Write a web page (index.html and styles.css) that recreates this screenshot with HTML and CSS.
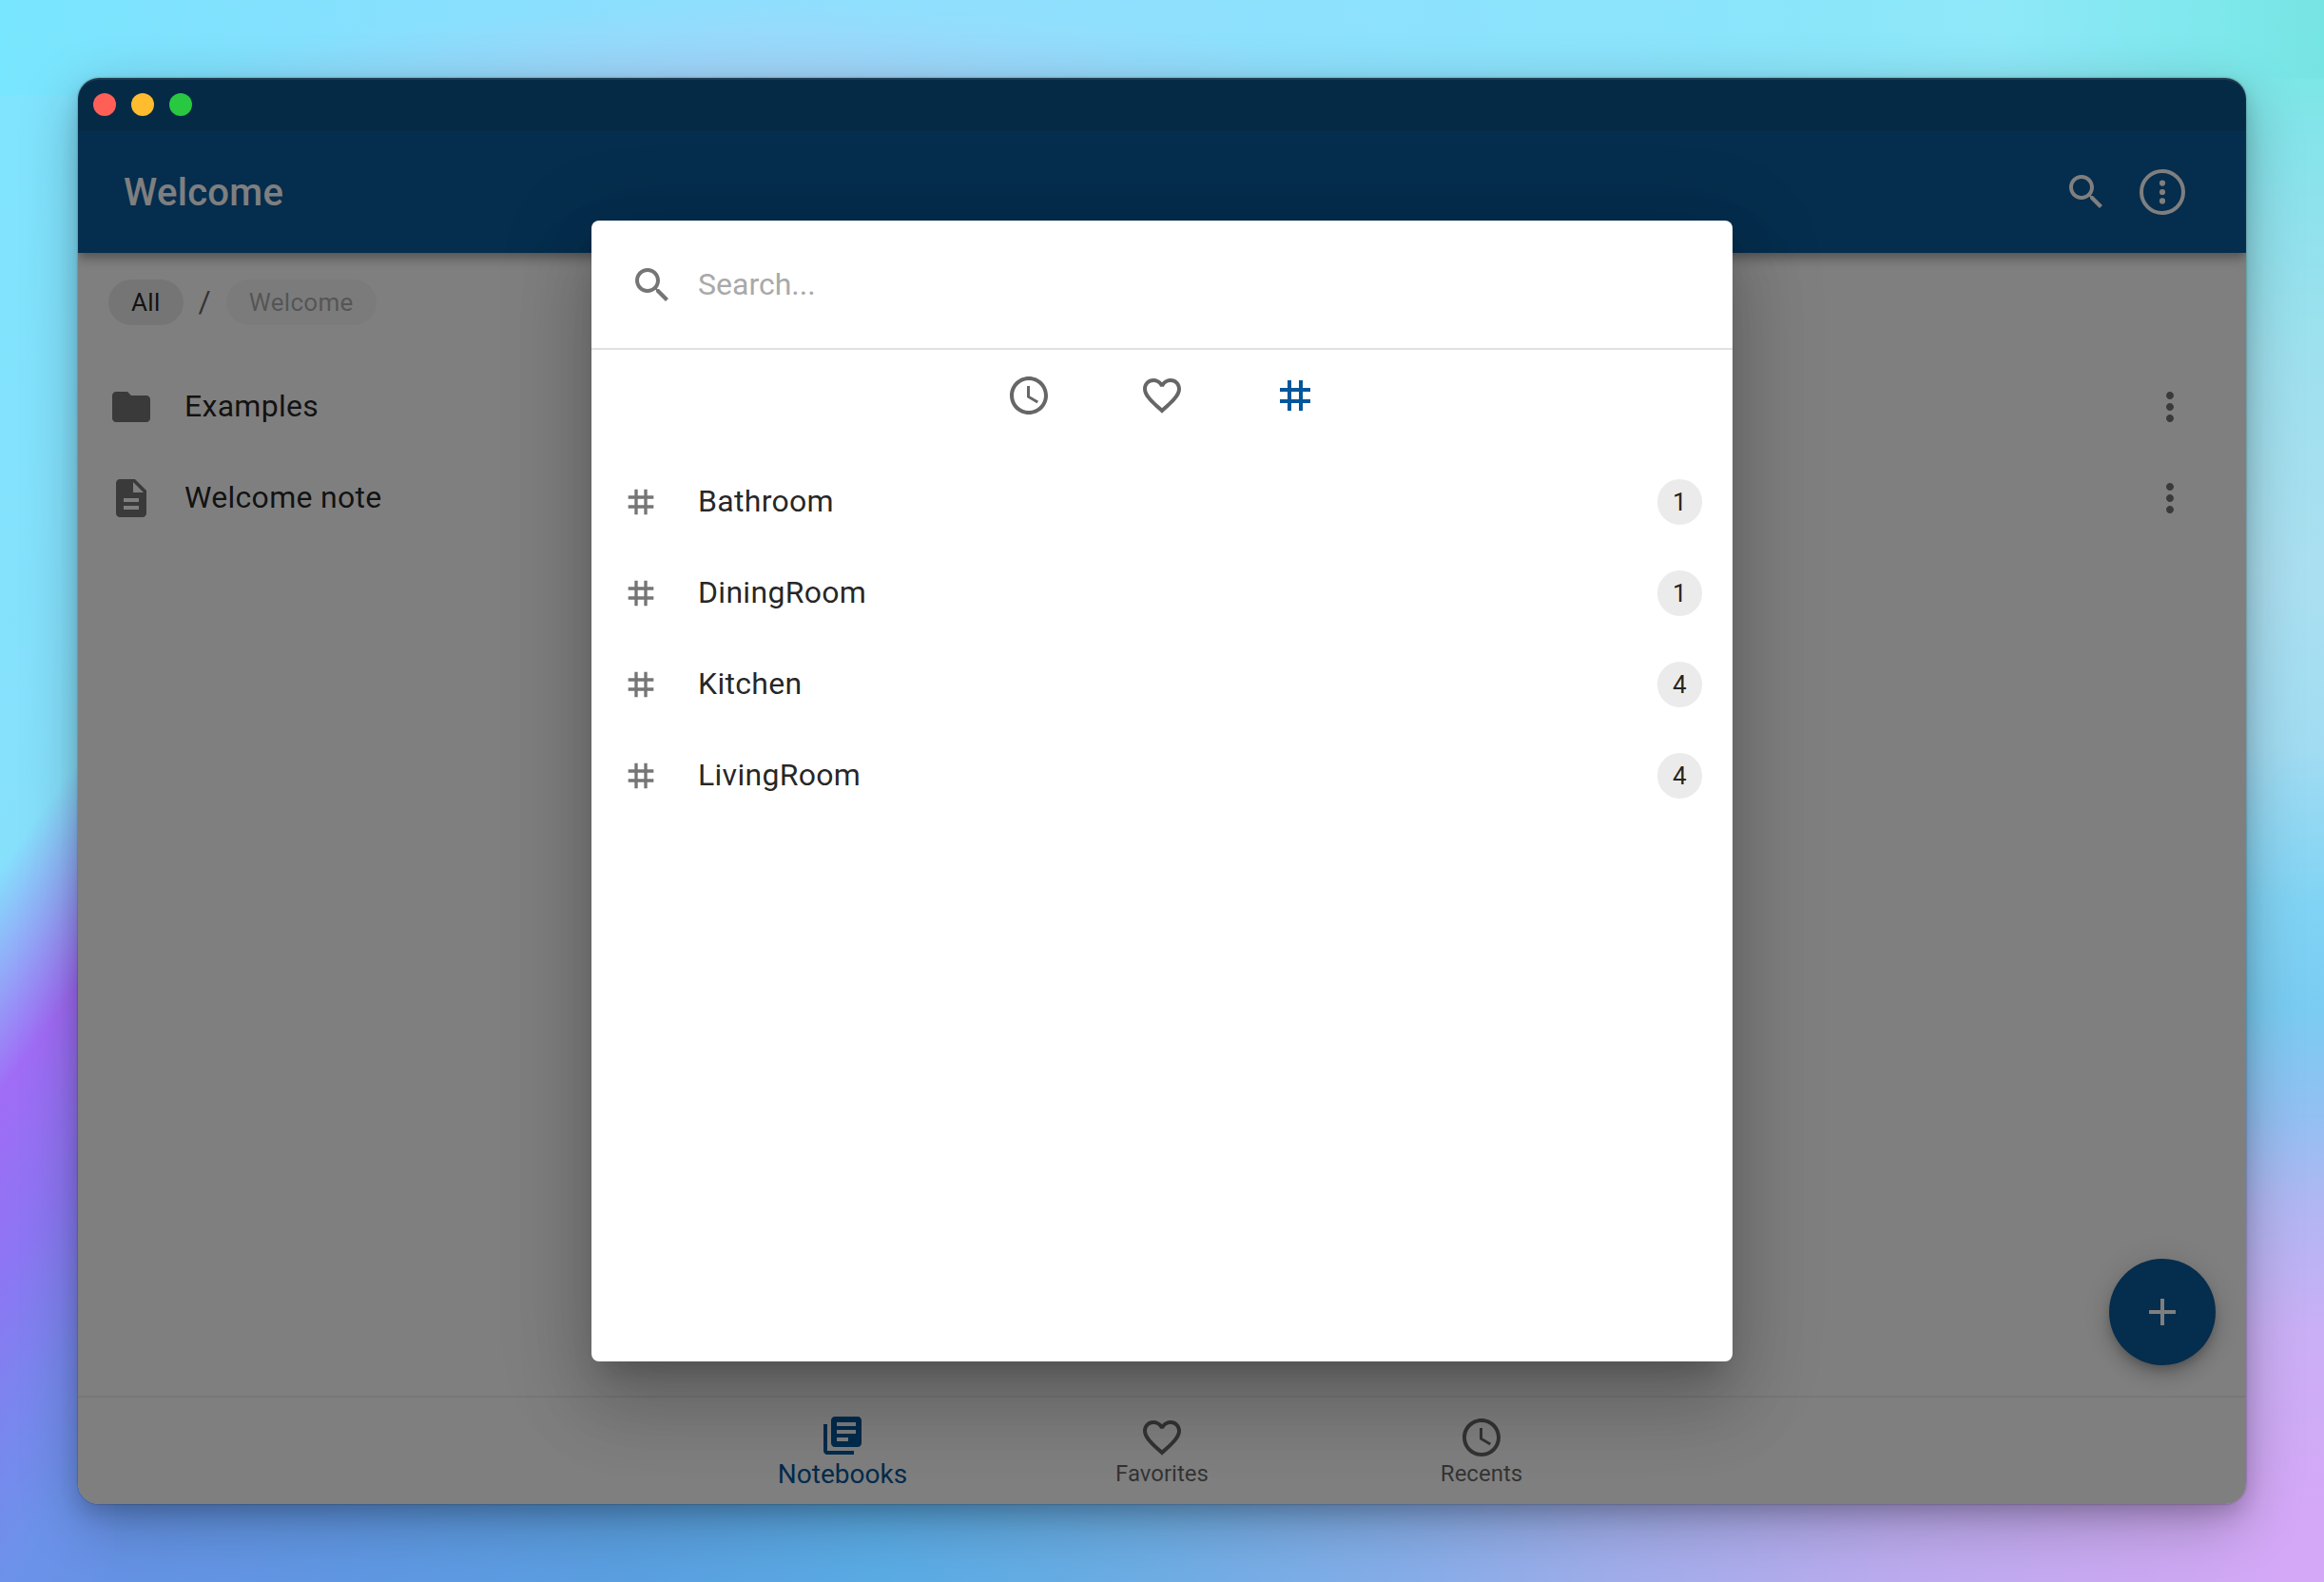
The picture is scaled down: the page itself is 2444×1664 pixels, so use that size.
FILE: index.html
```html
<!DOCTYPE html>
<html lang="en">
<head>
<meta charset="utf-8">
<title>Welcome</title>
<link rel="stylesheet" href="styles.css">
</head>
<body>
<svg class="sprite" width="0" height="0" aria-hidden="true">
  <symbol id="i-search" viewBox="0 0 24 24"><path d="M15.5 14h-.79l-.28-.27C15.41 12.59 16 11.11 16 9.5 16 5.91 13.09 3 9.5 3S3 5.91 3 9.5 5.91 16 9.5 16c1.61 0 3.09-.59 4.23-1.57l.27.28v.79l5 4.99L20.49 19l-4.99-5zm-6 0C7.01 14 5 11.99 5 9.5S7.01 5 9.5 5 14 7.01 14 9.5 11.99 14 9.5 14z"/></symbol>
  <symbol id="i-more" viewBox="0 0 24 24"><path d="M12 8c1.1 0 2-.9 2-2s-.9-2-2-2-2 .9-2 2 .9 2 2 2zm0 2c-1.1 0-2 .9-2 2s.9 2 2 2 2-.9 2-2-.9-2-2-2zm0 6c-1.1 0-2 .9-2 2s.9 2 2 2 2-.9 2-2-.9-2-2-2z"/></symbol>
  <symbol id="i-more-circle" viewBox="0 0 48 48"><circle cx="24" cy="24" r="22" fill="none" stroke="currentColor" stroke-width="4"/><circle cx="24" cy="14.6" r="3.1"/><circle cx="24" cy="24" r="3.1"/><circle cx="24" cy="33.4" r="3.1"/></symbol>
  <symbol id="i-folder" viewBox="0 0 24 24"><path d="M10 4H4c-1.1 0-1.99.9-1.99 2L2 18c0 1.1.9 2 2 2h16c1.1 0 2-.9 2-2V8c0-1.1-.9-2-2-2h-8l-2-2z"/></symbol>
  <symbol id="i-note" viewBox="0 0 24 24"><path d="M14 2H6c-1.1 0-1.99.9-1.99 2L4 20c0 1.1.89 2 1.99 2H18c1.1 0 2-.9 2-2V8l-6-6zm2 16H8v-2h8v2zm0-4H8v-2h8v2zm-3-5V3.5L18.5 9H13z"/></symbol>
  <symbol id="i-clock" viewBox="0 0 24 24"><path d="M11.99 2C6.47 2 2 6.48 2 12s4.47 10 9.99 10C17.52 22 22 17.52 22 12S17.52 2 11.99 2zM12 20c-4.42 0-8-3.58-8-8s3.58-8 8-8 8 3.58 8 8-3.58 8-8 8zm.5-13H11v6l5.25 3.15.75-1.23-4.5-2.67z"/></symbol>
  <symbol id="i-heart" viewBox="0 0 24 24"><path d="M16.5 3c-1.74 0-3.41.81-4.5 2.09C10.91 3.81 9.24 3 7.5 3 4.42 3 2 5.42 2 8.5c0 3.78 3.4 6.86 8.55 11.54L12 21.35l1.45-1.32C18.6 15.36 22 12.28 22 8.5 22 5.42 19.58 3 16.5 3zm-4.4 15.55-.1.1-.1-.1C7.14 14.24 4 11.39 4 8.5 4 6.5 5.5 5 7.5 5c1.54 0 3.04.99 3.57 2.36h1.87C13.46 5.99 14.96 5 16.5 5c2 0 3.5 1.5 3.5 3.5 0 2.89-3.14 5.74-7.9 10.05z"/></symbol>
  <symbol id="i-tag" viewBox="0 0 24 24"><path d="M20 10V8h-4V4h-2v4h-4V4H8v4H4v2h4v4H4v2h4v4h2v-4h4v4h2v-4h4v-2h-4v-4h4zm-6 4h-4v-4h4v4z"/></symbol>
  <symbol id="i-books" viewBox="0 0 24 24"><path d="M4 6H2v14c0 1.1.9 2 2 2h14v-2H4V6zm16-4H8c-1.1 0-2 .9-2 2v12c0 1.1.9 2 2 2h12c1.1 0 2-.9 2-2V4c0-1.1-.9-2-2-2zm-1 9H9V9h10v2zm-4 4H9v-2h6v2zm4-8H9V5h10v2z"/></symbol>
  <symbol id="i-add" viewBox="0 0 24 24"><path d="M19 13h-6v6h-2v-6H5v-2h6V5h2v6h6v2z"/></symbol>
</svg>

<div class="window">
  <div class="titlebar"></div>
  <header class="appbar">
    <h1 class="appbar-title">Welcome</h1>
    <div class="appbar-actions">
      <svg class="icon"><use href="#i-search"/></svg>
      <svg class="icon"><use href="#i-more-circle"/></svg>
    </div>
  </header>

  <main class="content">
    <nav class="crumbs">
      <span class="chip">All</span>
      <span class="slash">/</span>
      <span class="chip chip-disabled">Welcome</span>
    </nav>
    <ul class="list">
      <li class="list-row">
        <svg class="icon icon-muted"><use href="#i-folder"/></svg>
        <span class="list-text">Examples</span>
        <svg class="icon icon-muted"><use href="#i-more"/></svg>
      </li>
      <li class="list-row">
        <svg class="icon icon-muted"><use href="#i-note"/></svg>
        <span class="list-text">Welcome note</span>
        <svg class="icon icon-muted"><use href="#i-more"/></svg>
      </li>
    </ul>
    <button class="fab"><svg class="icon"><use href="#i-add"/></svg></button>
  </main>

  <footer class="bottom-nav">
    <a class="nav-item nav-item-active"><svg class="icon"><use href="#i-books"/></svg><span>Notebooks</span></a>
    <a class="nav-item"><svg class="icon"><use href="#i-heart"/></svg><span>Favorites</span></a>
    <a class="nav-item"><svg class="icon"><use href="#i-clock"/></svg><span>Recents</span></a>
  </footer>

  <div class="scrim">
    <section class="dialog">
      <div class="search">
        <svg class="icon icon-muted"><use href="#i-search"/></svg>
        <span class="search-placeholder">Search...</span>
      </div>
      <div class="tabs">
        <span class="tab"><svg class="icon"><use href="#i-clock"/></svg></span>
        <span class="tab"><svg class="icon"><use href="#i-heart"/></svg></span>
        <span class="tab tab-active"><svg class="icon"><use href="#i-tag"/></svg></span>
      </div>
      <ul class="tags">
        <li class="tag-row"><svg class="icon icon-small icon-muted"><use href="#i-tag"/></svg><span class="list-text">Bathroom</span><span class="chip count">1</span></li>
        <li class="tag-row"><svg class="icon icon-small icon-muted"><use href="#i-tag"/></svg><span class="list-text">DiningRoom</span><span class="chip count">1</span></li>
        <li class="tag-row"><svg class="icon icon-small icon-muted"><use href="#i-tag"/></svg><span class="list-text">Kitchen</span><span class="chip count">4</span></li>
        <li class="tag-row"><svg class="icon icon-small icon-muted"><use href="#i-tag"/></svg><span class="list-text">LivingRoom</span><span class="chip count">4</span></li>
      </ul>
    </section>
  </div>

  <div class="lights"><i class="light light-close"></i><i class="light light-min"></i><i class="light light-max"></i></div>
</div>
</body>
</html>
```

FILE: styles.css
```css
* { box-sizing: border-box; }

body {
  margin: 0;
  width: 2444px;
  height: 1664px;
  padding: 82px;
  overflow: hidden;
  font-family: Roboto, "Liberation Sans", sans-serif;
  font-size: 32px;
  letter-spacing: 0.3px;
  color: rgba(0, 0, 0, 0.87);
  /* wallpaper: top glow, then left, right, bottom and top bands */
  background:
    radial-gradient(ellipse 600px 90px at 800px 95px, #a4d2f8 0%, rgba(164, 210, 248, 0) 100%) no-repeat,
    linear-gradient(126deg, #80e4fe 0%, #86e0fc 47%, #93a6f8 54%, #a06cf6 60.7%, #8c76f3 72%, #7a86ee 81%, #6c92ea 90.5%, #6592e4 100%) 0 100px / 120px 1564px no-repeat,
    linear-gradient(to bottom, #7ce6e6 0, #8ce2ec 120px, #9fe0ee 300px, #aadff0 520px, #a2dcf2 700px, #80d3f4 870px, #7accf2 980px, #92c0f2 1090px, #b2b6f2 1190px, #caaff5 1320px, #d4a8f7 1500px) right 82px / 120px 1500px no-repeat,
    linear-gradient(to right, #6c90ee 0, #6592e4 120px, #5f98e2 400px, #5a9fe0 650px, #5aabe4 930px, #6cade4 1200px, #88ade8 1500px, #a0adea 1700px, #bcabee 2000px, #cda8f2 2300px, #d4a8f7 2400px) 0 100% / 100% 100px no-repeat,
    linear-gradient(to right, #78e6fe 0, #80e2fe 200px, #88dffe 500px, #90defd 800px, #8ee0fd 1250px, #8ae4fb 1800px, #8ee8f8 2100px, #7ee8ec 2330px, #76e4e2 2444px);
}

.sprite { position: absolute; }

h1, ul { margin: 0; padding: 0; list-style: none; }

.icon {
  display: block;
  flex: none;
  width: 48px;
  height: 48px;
  fill: currentColor;
}
.icon-small { width: 40px; height: 40px; }
.icon-muted { color: #757575; }

.window {
  position: relative;
  display: flex;
  flex-direction: column;
  width: 2280px;
  height: 1500px;
  border-radius: 22px;
  background: #fff;
  box-shadow: 0 0 2px rgba(0, 0, 0, 0.45), 0 10px 20px rgba(0, 0, 0, 0.14), 0 18px 60px rgba(0, 0, 0, 0.27);
}

.titlebar {
  height: 56px;
  border-radius: 22px 22px 0 0;
  background: #0a548a;
  box-shadow: inset 0 2px 0 rgba(255, 255, 255, 0.2);
}

.appbar {
  display: flex;
  align-items: center;
  justify-content: space-between;
  height: 128px;
  padding: 0 64px 0 48px;
  background: #0a5a9b;
  color: #fff;
  box-shadow: 0 4px 8px -2px rgba(0, 0, 0, 0.2), 0 8px 10px rgba(0, 0, 0, 0.14), 0 2px 20px rgba(0, 0, 0, 0.12);
  clip-path: inset(0 0 -40px 0);
}
.appbar-title { padding-top: 2px; font-size: 40px; font-weight: 500; line-height: 64px; }
.appbar-actions { display: flex; gap: 32px; }

.content {
  position: relative;
  flex: 1;
  padding: 28px 32px 0;
}

.crumbs { display: flex; align-items: center; gap: 16px; height: 48px; }
.slash { padding-bottom: 2px; color: rgba(0, 0, 0, 0.6); letter-spacing: 0; }

.chip {
  height: 48px;
  padding: 0 24px;
  border-radius: 24px;
  background: #ebebeb;
  font-size: 26px;
  line-height: 48px;
}
.chip-disabled { opacity: 0.38; }

.list { margin-top: 38px; padding-right: 24px; }
.list-row { display: flex; align-items: center; gap: 32px; height: 96px; }
.list-text { flex: 1; padding-bottom: 2px; line-height: 48px; }

.fab {
  position: absolute;
  right: 32px;
  bottom: 32px;
  display: grid;
  place-items: center;
  width: 112px;
  height: 112px;
  padding: 0;
  border: 0;
  border-radius: 50%;
  background: #0a5a9b;
  color: #fff;
  box-shadow: 0 6px 10px -2px rgba(0, 0, 0, 0.2), 0 12px 20px rgba(0, 0, 0, 0.14), 0 2px 36px rgba(0, 0, 0, 0.12);
}

.bottom-nav {
  display: flex;
  justify-content: center;
  height: 114px;
  border-top: 2px solid #f0f0f0;
}
.nav-item {
  display: flex;
  flex-direction: column;
  align-items: center;
  width: 336px;
  padding-top: 18px;
  font-size: 24px;
  line-height: 29px;
  letter-spacing: 0;
  color: rgba(0, 0, 0, 0.6);
}
.nav-item-active { padding-top: 16px; font-size: 28px; line-height: 34px; color: #01579b; }

.scrim {
  position: absolute;
  inset: 0;
  display: flex;
  justify-content: center;
  align-items: center;
  border-radius: 22px;
  overflow: hidden;
  background: rgba(0, 0, 0, 0.5);
}

.dialog {
  width: 1200px;
  height: 1200px;
  border-radius: 8px;
  background: #fff;
  box-shadow: 0 22px 30px -14px rgba(0, 0, 0, 0.2), 0 48px 76px 6px rgba(0, 0, 0, 0.14), 0 18px 92px 16px rgba(0, 0, 0, 0.12);
}
.search {
  display: flex;
  align-items: center;
  gap: 24px;
  height: 136px;
  padding: 2px 40px 0;
  border-bottom: 2px solid #e0e0e0;
}
.search-placeholder { padding-bottom: 2px; color: #a9a9a9; letter-spacing: 0; }

.tabs { display: flex; justify-content: center; height: 96px; }
.tab { display: grid; place-items: center; width: 140px; color: #666; }
.tab-active { color: #01579b; }

.tags { padding-top: 16px; }
.tag-row { display: flex; align-items: center; gap: 40px; height: 96px; padding: 0 32px; }
.count { padding: 0 16px; }

.lights { position: absolute; top: 16px; left: 16px; display: flex; gap: 16px; }
.light { width: 24px; height: 24px; border-radius: 50%; }
.light-close { background: #ff5f57; }
.light-min { background: #febc2e; }
.light-max { background: #28c840; }
```
